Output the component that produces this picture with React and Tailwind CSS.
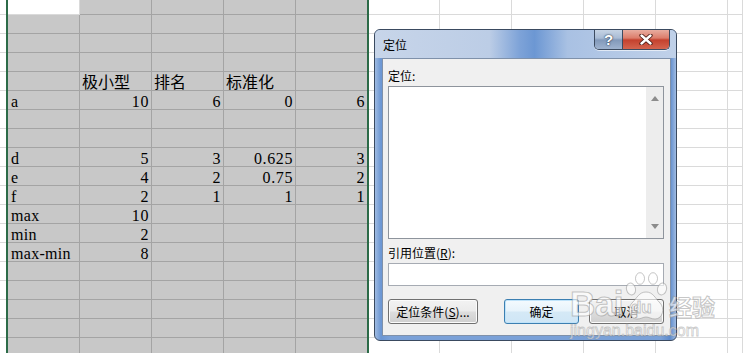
import React from "react";

const data = {
  4: { 2: "极小型", 3: "排名", 4: "标准化" },
  5: { 1: "a", 2: "10", 3: "6", 4: "0", 5: "6" },
  8: { 1: "d", 2: "5", 3: "3", 4: "0.625", 5: "3" },
  9: { 1: "e", 2: "4", 3: "2", 4: "0.75", 5: "2" },
  10: { 1: "f", 2: "2", 3: "1", 4: "1", 5: "1" },
  11: { 1: "max", 2: "10" },
  12: { 1: "min", 2: "2" },
  13: { 1: "max-min", 2: "8" },
};

const ROWS = 19;
const COLS = 12;

function Sheet() {
  const cells = [];
  for (let r = 0; r < ROWS; r++) {
    for (let c = 0; c < COLS; c++) {
      const selected = c >= 1 && c <= 5 && !(r === 0 && c === 1);
      const v = data[r] && data[r][c];
      const isCJK = r === 4;
      let content = null;
      if (v) {
        if (isCJK) {
          content = (
            <span className="block pl-[2px] pt-[1px] leading-[17px] text-[16px] font-['Noto_Sans_CJK_SC',sans-serif] whitespace-nowrap">
              {v}
            </span>
          );
        } else {
          content = (
            <span
              className={
                "block pt-[4px] leading-[14px] text-[16px] font-['Liberation_Serif',serif] whitespace-nowrap " +
                (c === 1 ? "pl-[3px] text-left tracking-[0.3px]" : "pr-[2px] text-right tracking-[0.6px]")
              }
            >
              {v}
            </span>
          );
        }
      }
      cells.push(
        <div
          key={r + "-" + c}
          className={
            "border-r border-b text-black " +
            (selected ? "bg-[#c8c8c8] border-[#a4a4a4]" : "bg-white border-[#dadada]")
          }
        >
          {content}
        </div>
      );
    }
  }
  return (
    <div className="grid grid-cols-[8px_repeat(10,72px)_15px] grid-rows-[15px_repeat(18,19px)]">
      {cells}
    </div>
  );
}

function TitleButtons() {
  return (
    <div className="flex h-[21px] -mt-px mr-[6px] border border-t-0 border-[#3c4b60] rounded-b-[5px] overflow-hidden shadow-[0_1px_0_rgba(255,255,255,0.6)]">
      <div className="w-[28px] h-full flex items-center justify-center border-r border-[#3c4b60] bg-[linear-gradient(180deg,#c9d6e6_0%,#a9bcd5_45%,#8299ba_55%,#9fb3cf_100%)]">
        <span className="text-white font-bold text-[15px] leading-none font-['Liberation_Sans',sans-serif] [text-shadow:0_0_2px_#2a3a50,0_0_1px_#2a3a50]">
          ?
        </span>
      </div>
      <div className="w-[46px] h-full flex items-center justify-center bg-[linear-gradient(180deg,#eab3a6_0%,#dc7d6b_45%,#c4412e_55%,#d4644e_100%)]">
        <svg width="14" height="11" viewBox="0 0 14 11">
          <path d="M2.5 1.5 L11.5 9.5 M11.5 1.5 L2.5 9.5" stroke="#4a1b14" strokeWidth="4.2" strokeLinecap="round" />
          <path d="M2.5 1.5 L11.5 9.5 M11.5 1.5 L2.5 9.5" stroke="#ffffff" strokeWidth="2.4" strokeLinecap="round" />
        </svg>
      </div>
    </div>
  );
}

function WinButton({ children, def, className = "" }) {
  return (
    <div
      className={
        "h-[25px] rounded-[3px] border flex items-center justify-center text-[12px] text-black " +
        (def
          ? "border-[#3c7fb1] bg-[linear-gradient(180deg,#f4fafe_0%,#e7f3fb_48%,#d5e9f6_52%,#cfe6f6_100%)] shadow-[inset_0_0_0_1px_#bfe3fa] "
          : "border-[#707070] bg-[linear-gradient(180deg,#f2f2f2_0%,#ebebeb_48%,#dddddd_52%,#cfcfcf_100%)] shadow-[inset_0_0_0_1px_#fbfbfb] ") +
        className
      }
    >
      {children}
    </div>
  );
}

function Dialog() {
  return (
    <div className="absolute left-[374px] top-[29px] w-[303px] h-[312px] rounded-[6px] border border-[#3a4a60] bg-[linear-gradient(90deg,#9fbbe2_0%,#6b96d3_2%,#7aa1d8_5%,#7aa1d8_95%,#5d8acb_98%,#9fbbe2_100%)] flex flex-col overflow-hidden font-['Noto_Sans_CJK_SC',sans-serif]">
      <div className="h-[28px] flex items-start justify-between bg-[linear-gradient(90deg,#c7d5e9_0%,#bccde6_38%,#7ea3d8_48%,#6c97d3_53%,#a9c1e3_64%,#c0d1e9_100%)]">
        <span className="pl-[8px] pt-[8px] text-[12px] leading-[14px] text-black">定位</span>
        <TitleButtons />
      </div>
      <div className="flex-1 pl-[7px] pr-[5px] pb-[4px]">
        <div className="h-full border border-[#7f91aa] bg-[#f0f0f0] pl-[5px] pr-[6px] flex flex-col">
          <div className="mt-[9px] h-[16px] text-[12px] leading-[16px]">定位:</div>
          <div className="mt-[2px] h-[153px] border border-[#8e949c] bg-white flex justify-end">
            <div className="w-[17px] h-full bg-[#ededed] flex flex-col items-center justify-between py-[9px]">
              <svg width="8" height="5" viewBox="0 0 8 5">
                <path d="M0 5 L4 0 L8 5 Z" fill="#8c8c8c" />
              </svg>
              <svg width="8" height="5" viewBox="0 0 8 5">
                <path d="M0 0 L4 5 L8 0 Z" fill="#8c8c8c" />
              </svg>
            </div>
          </div>
          <div className="mt-[6px] h-[16px] text-[12px] leading-[16px]">
            引用位置(<span className="underline">R</span>):
          </div>
          <div className="mt-[2px] h-[23px] border border-[#a6abb3] bg-white" />
          <div className="mt-[13px] flex">
            <WinButton className="w-[90px]">
              定位条件(<span className="underline">S</span>)...
            </WinButton>
            <div className="ml-auto flex gap-[10px]">
              <WinButton def className="w-[75px]">确定</WinButton>
              <WinButton className="w-[75px]">取消</WinButton>
            </div>
          </div>
        </div>
      </div>
    </div>
  );
}

const wmText =
  "text-white/70 [-webkit-text-stroke:1px_rgba(140,140,140,0.55)] font-bold leading-none whitespace-nowrap";

function Watermark() {
  return (
    <div className="absolute left-[570px] top-[272px] pointer-events-none flex flex-col opacity-90">
      <div className="flex items-end h-[49px]">
        <span className={"text-[35px] font-['Liberation_Sans',sans-serif] tracking-[-0.5px] " + wmText}>Bai</span>
        <div className="relative w-[44px] h-[49px] ml-[1px]">
          <svg width="44" height="49" viewBox="0 0 44 49" className="absolute left-0 top-0">
            <g fill="rgba(255,255,255,0.7)" stroke="rgba(140,140,140,0.55)" strokeWidth="1">
              <ellipse cx="7" cy="17" rx="4.5" ry="6" transform="rotate(-15 7 17)" />
              <ellipse cx="16" cy="6.5" rx="4.5" ry="5.8" />
              <ellipse cx="29" cy="6.5" rx="4.5" ry="5.8" />
              <ellipse cx="38" cy="17" rx="4.5" ry="6" transform="rotate(15 38 17)" />
              <path d="M22 20 C15 20 13 26 8 31 C3 36 5 47 13 47 C17 47 19 45 22 45 C25 45 27 47 31 47 C39 47 41 36 36 31 C31 26 29 20 22 20 Z" />
            </g>
          </svg>
          <span className={"absolute left-[7px] top-[27px] text-[17px] font-['Liberation_Sans',sans-serif] " + wmText}>du</span>
        </div>
        <span className={"ml-[1px] mb-[3px] text-[23px] font-['Noto_Sans_CJK_SC',sans-serif] " + wmText}>经验</span>
      </div>
      <span className={"mt-[2px] text-[16px] font-normal font-['Liberation_Sans',sans-serif] text-white/70 [-webkit-text-stroke:0.8px_rgba(140,140,140,0.5)] leading-none whitespace-nowrap"}>
        jingyan.baidu.com
      </span>
    </div>
  );
}

export default function App() {
  return (
    <div className="relative w-[743px] h-[353px] overflow-hidden bg-white">
      <Sheet />
      <div className="absolute left-[6px] top-0 w-[363px] h-[353px] border-l-2 border-r-2 border-[#2c6b48] pointer-events-none" />
      <Dialog />
      <Watermark />
    </div>
  );
}
